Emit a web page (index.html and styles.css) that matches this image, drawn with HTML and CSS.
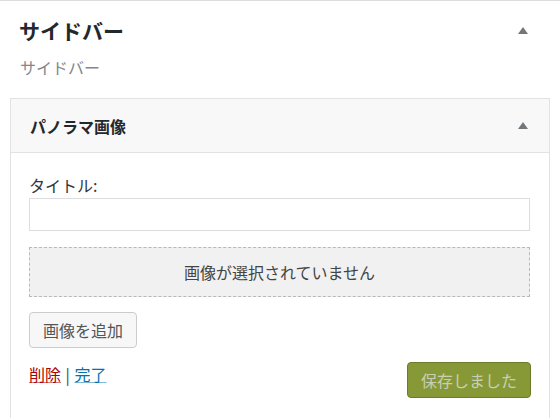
FILE: index.html
```html
<!DOCTYPE html>
<html lang="ja">
<head>
  <meta charset="UTF-8" />
  <title>サイドバー</title>
  <link rel="stylesheet" href="styles.css">
</head>
<body>

  <div class="section">
    <div class="section-head">
      <h2>サイドバー</h2>
      <span class="toggle"></span>
    </div>
    <p class="desc">サイドバー</p>

    <div class="widget">
      <div class="widget-head">
        <h3>パノラマ画像</h3>
        <span class="toggle"></span>
      </div>

      <div class="widget-body">
        <label for="title">タイトル:</label>
        <input type="text" id="title" />

        <div class="placeholder">画像が選択されていません</div>

        <button type="button" class="btn">画像を追加</button>

        <div class="actions">
          <div class="links">
            <a href="#" class="delete">削除</a> | <a href="#" class="done">完了</a>
          </div>
          <button type="button" class="btn-save" disabled>保存しました</button>
        </div>
      </div>
    </div>
  </div>

</body>
</html>
```

FILE: styles.css
```css
/* ウィジェット画面 */
body {
  margin: 0;
  font-family: "Noto Sans CJK JP", "Noto Sans", sans-serif;
  font-size: 16px;
  line-height: 24px;
  color: #444;
  background-color: #fff;
}
.section {
  border-top: 1px solid #ddd;
  padding-top: 15px;
  height: 417px;
  overflow: hidden;
}
.section-head {
  display: flex;
  align-items: center;
  justify-content: space-between;
  padding: 0 32px 0 19px;
}
.section-head h2 {
  margin: 0;
  font-size: 21px;
  line-height: 28px;
  font-weight: 700;
  color: #23282d;
}
.toggle {
  width: 0;
  height: 0;
  border-left: 5px solid transparent;
  border-right: 5px solid transparent;
  border-bottom: 7px solid #72777c;
}
.desc {
  margin: 11px 0 19px 20px;
  color: #82878c;
}
.widget {
  margin-left: 10px;
  width: 538px;
  border: 1px solid #e2e2e2;
}
.widget-head {
  display: flex;
  align-items: center;
  justify-content: space-between;
  height: 53px;
  padding: 0 21px 0 19px;
  background-color: #f8f8f8;
  border-bottom: 1px solid #e2e2e2;
}
.widget-head h3 {
  margin: 0;
  font-size: 16px;
  font-weight: 700;
  color: #23282d;
}
.widget-body {
  padding: 20px 19px 20px 18px;
}
label {
  display: block;
  color: #32373c;
}
input[type="text"] {
  display: block;
  box-sizing: border-box;
  width: 100%;
  height: 33px;
  margin-top: 1px;
  border: 1px solid #ddd;
  background-color: #fff;
  font-family: inherit;
  font-size: 16px;
}
.placeholder {
  box-sizing: border-box;
  height: 50px;
  margin-top: 16px;
  border: 1px dashed #b4b9be;
  background-color: #f1f1f1;
  display: flex;
  align-items: center;
  justify-content: center;
  color: #444;
}
.btn {
  display: block;
  margin-top: 15px;
  height: 36px;
  padding: 0 13px;
  border: 1px solid #ccc;
  border-radius: 4px;
  background-color: #f7f7f7;
  color: #555;
  font-family: inherit;
  font-size: 16px;
}
.actions {
  display: flex;
  justify-content: space-between;
  align-items: flex-start;
  margin-top: 14px;
}
.links {
  color: #444;
  word-spacing: 1px;
}
.links a {
  text-decoration: underline;
}
.delete {
  color: #a00;
  text-decoration-color: #d47a80 !important;
}
.done {
  color: #0073aa;
  text-decoration-color: #7fb8d4 !important;
}
.btn-save {
  height: 36px;
  padding: 0 13px;
  margin-right: -1px;
  border: 1px solid #6c7a2b;
  border-radius: 4px;
  background-color: #879937;
  color: #c9cfb5;
  font-family: inherit;
  font-size: 16px;
}
```
